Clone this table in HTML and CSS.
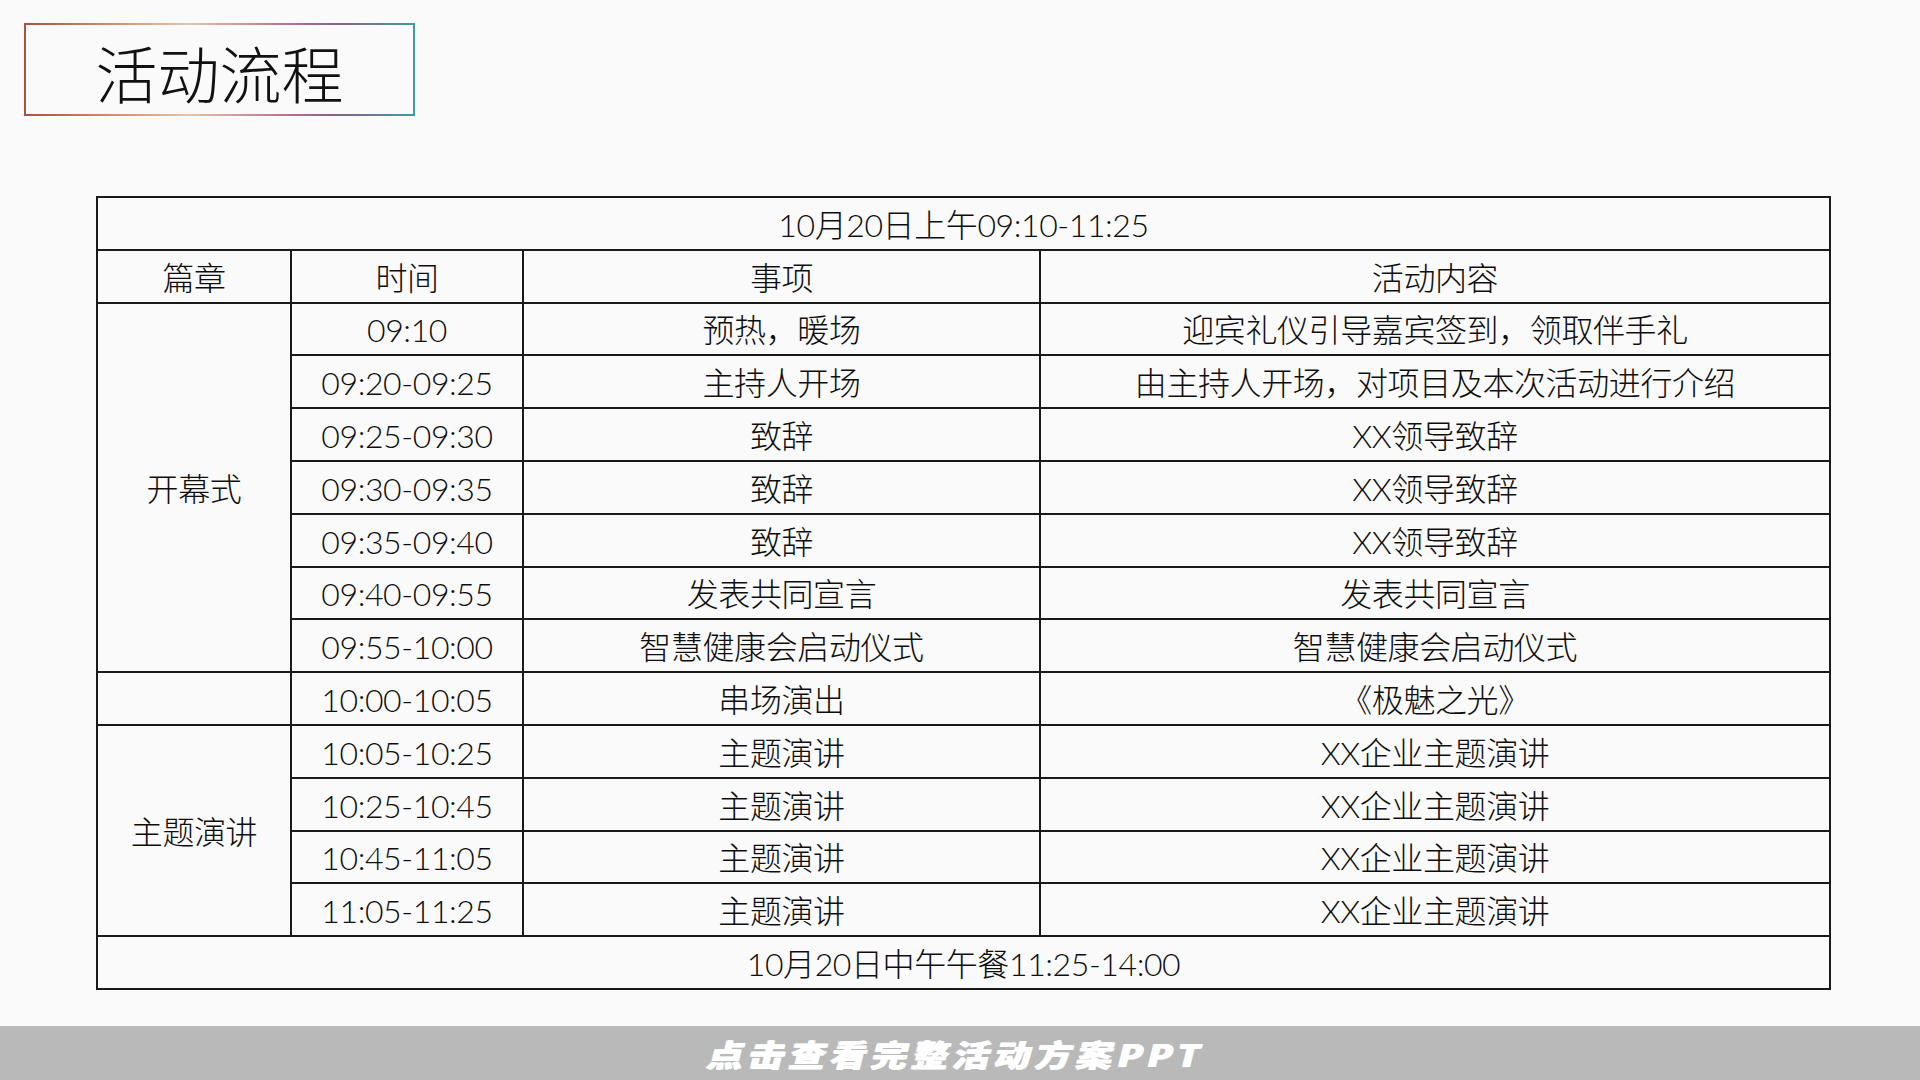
FILE: index.html
```html
<!DOCTYPE html>
<html lang="zh-CN">
<head>
<meta charset="utf-8">
<title>活动流程</title>
<link rel="stylesheet" href="styles.css">
</head>
<body>
<div class="page">
  <header class="title-box"><h1 class="title">活动流程</h1></header>
  <main class="content">
    <table class="schedule">
      <colgroup>
        <col class="c1"><col class="c2"><col class="c3"><col class="c4">
      </colgroup>
      <tbody>
        <tr><td colspan="4">10月20日上午09:10-11:25</td></tr>
        <tr><td>篇章</td><td>时间</td><td>事项</td><td>活动内容</td></tr>
        <tr><td rowspan="7">开幕式</td><td>09:10</td><td>预热，暖场</td><td>迎宾礼仪引导嘉宾签到，领取伴手礼</td></tr>
        <tr><td>09:20-09:25</td><td>主持人开场</td><td>由主持人开场，对项目及本次活动进行介绍</td></tr>
        <tr><td>09:25-09:30</td><td>致辞</td><td>XX领导致辞</td></tr>
        <tr><td>09:30-09:35</td><td>致辞</td><td>XX领导致辞</td></tr>
        <tr><td>09:35-09:40</td><td>致辞</td><td>XX领导致辞</td></tr>
        <tr><td>09:40-09:55</td><td>发表共同宣言</td><td>发表共同宣言</td></tr>
        <tr><td>09:55-10:00</td><td>智慧健康会启动仪式</td><td>智慧健康会启动仪式</td></tr>
        <tr><td></td><td>10:00-10:05</td><td>串场演出</td><td>《极魅之光》</td></tr>
        <tr><td rowspan="4">主题演讲</td><td>10:05-10:25</td><td>主题演讲</td><td>XX企业主题演讲</td></tr>
        <tr><td>10:25-10:45</td><td>主题演讲</td><td>XX企业主题演讲</td></tr>
        <tr><td>10:45-11:05</td><td>主题演讲</td><td>XX企业主题演讲</td></tr>
        <tr><td>11:05-11:25</td><td>主题演讲</td><td>XX企业主题演讲</td></tr>
        <tr><td colspan="4">10月20日中午午餐11:25-14:00</td></tr>
      </tbody>
    </table>
  </main>
  <footer class="footer"><span class="footer-text">点击查看完整活动方案PPT</span></footer>
</div>
</body>
</html>
```
FILE: styles.css
```css
html, body {
  margin: 0;
  padding: 0;
  background: #fafafa;
}
.page {
  width: 1920px;
  height: 1080px;
  display: flex;
  flex-direction: column;
  overflow: hidden;
  font-family: "Lato", "Noto Sans CJK SC", sans-serif;
  color: #111;
}
.title-box {
  margin: 23px 0 0 24px;
  width: 387px;
  height: 89px;
  border: 2px solid;
  border-image: linear-gradient(90deg, #a9523e 0%, #d08d6a 22%, #e6c3a4 42%, #b26a8c 70%, #8a5f8e 80%, #3f9aa0 100%) 1;
  display: flex;
  align-items: center;
  justify-content: center;
}
.title {
  margin: 4px 0 0 0;
  font-family: "Noto Sans CJK SC", sans-serif;
  font-weight: 300;
  font-size: 62px;
  line-height: 1;
  color: #111;
}
.content {
  padding: 80px 0 0 96px;
}
.schedule {
  border-collapse: collapse;
  table-layout: fixed;
  width: 1733px;
  font-size: 32px;
  font-weight: 300;
  letter-spacing: -0.4px;
  color: #0d0d0d;
}
.c1 { width: 194px; }
.c2 { width: 232px; }
.c3 { width: 517px; }
.c4 { width: 790px; }
.schedule tr {
  height: 52.8px;
}
.schedule td {
  border: 2px solid #1a1a1a;
  padding: 3px 0 0 0;
  text-align: center;
  vertical-align: middle;
  line-height: 1;
  white-space: nowrap;
}
.footer {
  margin-top: auto;
  height: 54px;
  background: #b9b9b9;
  display: flex;
  align-items: center;
  justify-content: center;
}
.footer-text {
  display: inline-block;
  font-family: "Noto Sans CJK SC", sans-serif;
  font-weight: 900;
  font-size: 36px;
  letter-spacing: 5px;
  color: #ffffff;
  transform: scaleY(0.86) skewX(-12deg);
  text-shadow: 0.8px 0 0 #fff, -0.8px 0 0 #fff;
  line-height: 1;
  margin-left: -6px;
}
```
